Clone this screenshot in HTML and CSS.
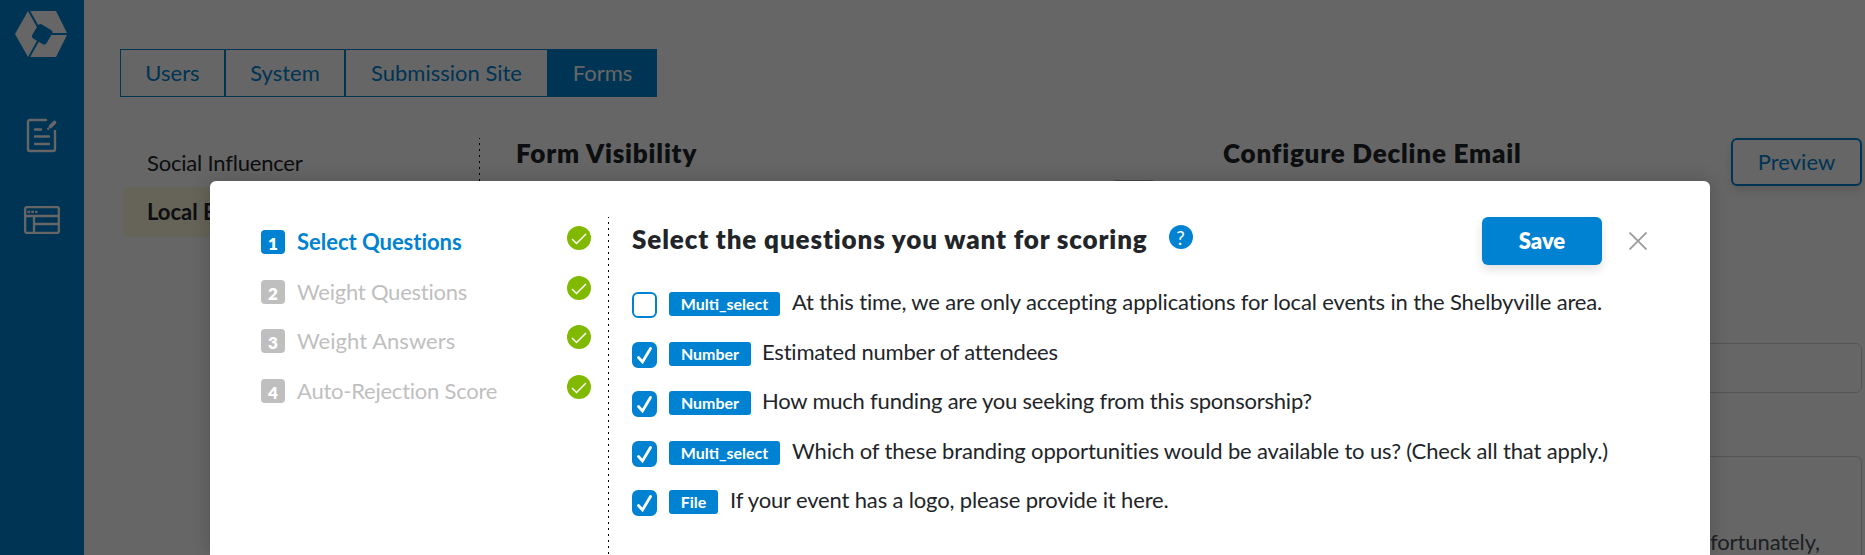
FILE: index.html
```html
<!DOCTYPE html>
<html lang="en">
<head>
  <meta charset="UTF-8">
  <title>Forms</title>
  <link rel="stylesheet" href="styles.css">
</head>
<body>
  <div class="app">
    <nav class="sidebar">
      <svg class="logo" width="54" height="48" viewBox="0 0 54 48">
        <path d="M1 24L14 1H42L53.500 24L42 47H14z"/>
        <path class="logo-gap" d="M14.500 0L28 24L14.500 48M28 24H54"/>
        <rect class="logo-core" x="20" y="16" width="16.500" height="16.500" rx="3" transform="rotate(31 28.200 24.200)"/>
      </svg>
      <svg class="nav-icon icon-form" width="32" height="35" viewBox="0 0 32 35" fill="none" stroke-width="2.400" stroke-linecap="round">
        <path d="M20 2H4Q2 2 2 4V31Q2 33 4 33H27Q29 33 29 31V13M9 11.500h6M9 18.500h14M9 26h14"/>
        <path d="M24.500 8.500l4-4" stroke-width="3.800"/>
        <path d="M22.300 10.700v.1"/>
      </svg>
      <svg class="nav-icon icon-table" width="36" height="28" viewBox="0 0 36 28" fill="none" stroke-width="2.300">
        <rect x="1.200" y="1.200" width="33.600" height="25.600" rx="1.500"/>
        <path d="M1 10h34M10 10V27M10 18h25"/>
        <path d="M3.500 5.800h10" stroke-dasharray="2.600 1.200"/>
      </svg>
    </nav>
    <main class="page">
      <div class="tabs">
        <a class="tab tab-users">Users</a>
        <a class="tab tab-system">System</a>
        <a class="tab tab-site">Submission Site</a>
        <a class="tab tab-forms active">Forms</a>
      </div>
      <div class="content">
        <ul class="forms-list">
          <li>Social Influencer</li>
          <li class="current">Local Event</li>
        </ul>
        <section class="visibility">
          <h2>Form Visibility</h2>
          <div class="toggle"></div>
        </section>
        <section class="decline">
          <div class="decline-head">
            <h2>Configure Decline Email</h2>
            <button class="preview">Preview</button>
          </div>
          <div class="input"></div>
          <div class="textarea">Unfortunately,</div>
        </section>
      </div>
    </main>
  </div>
  <div class="overlay">
    <div class="modal">
      <ol class="steps">
        <li class="active"><b>1</b><span>Select Questions</span><svg class="done" viewBox="0 0 24 24"><circle cx="12" cy="12" r="12"/><path d="M5 13l4.500 4.500L19 8"/></svg></li>
        <li><b>2</b><span>Weight Questions</span><svg class="done" viewBox="0 0 24 24"><circle cx="12" cy="12" r="12"/><path d="M5 13l4.500 4.500L19 8"/></svg></li>
        <li><b>3</b><span class="step-answers">Weight Answers</span><svg class="done" viewBox="0 0 24 24"><circle cx="12" cy="12" r="12"/><path d="M5 13l4.500 4.500L19 8"/></svg></li>
        <li><b>4</b><span>Auto-Rejection Score</span><svg class="done" viewBox="0 0 24 24"><circle cx="12" cy="12" r="12"/><path d="M5 13l4.500 4.500L19 8"/></svg></li>
      </ol>
      <section class="questions">
        <header class="modal-head">
          <h2>Select the questions you want for scoring</h2>
          <span class="help">?</span>
          <button class="save">Save</button>
          <svg class="close" width="18" height="18" viewBox="0 0 18 18"><path d="M.5.5l17 17M17.500.5L.5 17.500"/></svg>
        </header>
        <div class="question"><i class="box"></i><em class="tag tag-multi">Multi_select</em><span>At this time, we are only accepting applications for local events in the Shelbyville area.</span></div>
        <div class="question"><i class="box checked"><svg viewBox="0 0 25 26"><path d="M6.500 15.500l4 4.500L18.500 6.500"/></svg></i><em class="tag tag-number">Number</em><span class="tight">Estimated number of attendees</span></div>
        <div class="question"><i class="box checked"><svg viewBox="0 0 25 26"><path d="M6.500 15.500l4 4.500L18.500 6.500"/></svg></i><em class="tag tag-number">Number</em><span class="tight">How much funding are you seeking from this sponsorship?</span></div>
        <div class="question"><i class="box checked"><svg viewBox="0 0 25 26"><path d="M6.500 15.500l4 4.500L18.500 6.500"/></svg></i><em class="tag tag-multi">Multi_select</em><span>Which of these branding opportunities would be available to us? (Check all that apply.)</span></div>
        <div class="question"><i class="box checked"><svg viewBox="0 0 25 26"><path d="M6.500 15.500l4 4.500L18.500 6.500"/></svg></i><em class="tag tag-file">File</em><span>If your event has a logo, please provide it here.</span></div>
      </section>
    </div>
  </div>
</body>
</html>
```
FILE: styles.css
```css
* { box-sizing: border-box; }
body { margin: 0; height: 555px; overflow: hidden; background: #fff; color: #212529; font: 22px/30px Lato, "Open Sans", sans-serif; font-variant-ligatures: none; white-space: nowrap; }
h2 { margin: 0; font-size: 26px; font-weight: 800; letter-spacing: 0.8px; }
ul, ol { margin: 0; padding: 0; list-style: none; }
button { font: inherit; padding: 0; border-radius: 6px; box-shadow: 0 5px 10px rgba(0,0,0,0.12); }

/* page */
.app { display: flex; height: 555px; }
.sidebar { flex: none; width: 84px; background: #0082d2; display: flex; flex-direction: column; }
.logo { margin: 10px 0 0 14px; fill: #fff; }
.logo-core { fill: #0082d2; }
.logo-gap { fill: none; stroke: #0082d2; stroke-width: 2; }
.nav-icon { stroke: #fff; }
.icon-form { margin: 60px 0 0 26px; }
.icon-table { margin: 53px 0 0 24px; }
.page { flex: 1; padding: 49px 3px 0 36px; }
.tabs { display: flex; height: 48px; color: #0082d2; }
.tab { border: 1px solid #0082d2; text-align: center; line-height: 46px; }
.tab-users { width: 105px; }
.tab-system { width: 120px; }
.tab-site { width: 203px; }
.tab-forms { width: 109px; }
.tab.active { background: #0082d2; color: #fff; }
.content { display: flex; padding-top: 41px; }
.forms-list { width: 360px; height: 417px; padding-left: 3px; background: linear-gradient(#000 2px, transparent 2px) right -1px / 1px 6px repeat-y; }
.forms-list li { width: 330px; height: 49px; padding: 10px 0 0 24px; letter-spacing: -0.2px; }
.forms-list .current { height: 50px; background: #fff8dc; font-weight: 700; border-radius: 3px; letter-spacing: 0; }
.visibility { width: 707px; padding-left: 36px; }
.visibility h2, .decline h2 { line-height: 30px; }
.toggle { width: 56px; height: 24px; margin: 12px 0 0 590px; border-radius: 12px; background: #adb5bd; }
.decline { flex: 1; padding-left: 36px; }
.decline-head { display: flex; justify-content: space-between; }
.preview { width: 131px; height: 48px; border: 2px solid #0082d2; background: #fff; color: #0082d2; }
.input, .textarea { border: 1px solid #ced4da; border-radius: 6px; }
.input { height: 50px; margin-top: 157px; }
.textarea { height: 99px; margin-top: 63px; padding: 72px 41px 0 0; border-bottom: 0; border-radius: 6px 6px 0 0; line-height: 26px; text-align: right; color: #495057; letter-spacing: -0.1px; }

/* modal */
.overlay { position: absolute; inset: 0; padding: 181px 155px 0 210px; background: rgba(0,0,0,0.6); overflow: hidden; }
.modal { display: flex; height: 374px; padding: 36px 63px 0 51px; border-radius: 6px 6px 0 0; background: #fff; box-shadow: 0 0 20px rgba(0,0,0,0.2); }
.steps { width: 348px; padding: 9px 18px 0 0; color: #bfbfbf; background: linear-gradient(#000 2px, transparent 2px) right -1px / 1px 6px repeat-y; }
.steps li { display: flex; height: 49.6px; }
.steps b { width: 24px; height: 24px; margin: 4px 12px 0 0; border-radius: 4px; background: #bfbfbf; color: #fff; font: 800 17px/27px Lato, sans-serif; text-align: center; }
.steps span { padding-top: 1px; letter-spacing: -0.23px; }
.steps .step-answers { letter-spacing: 0.05px; }
.steps .active { color: #0082d2; font-weight: 700; }
.steps .active span { letter-spacing: -0.03px; }
.steps .active b { background: #0082d2; }
.done { width: 24px; height: 24px; margin-left: auto; }
.done circle { fill: #80b900; }
.done path { fill: none; stroke: #fff; stroke-width: 1.500; }
.questions { flex: 1; padding-left: 23px; }
.modal-head { display: flex; height: 75px; }
.modal-head h2 { padding-top: 5px; line-height: 34px; letter-spacing: 0.86px; }
.help { width: 24px; height: 24px; margin: 8px 0 0 21px; border-radius: 50%; background: #0082d2; color: #fff; font: 19px/25px Lato, sans-serif; text-align: center; }
.save { width: 120px; height: 48px; margin-left: auto; border: 0; background: #0082d2; color: #fff; font-weight: 800; }
.close { margin: 15px 0 0 27px; stroke: #999; stroke-width: 1.700; }
.question { display: flex; height: 49.6px; }
.box { width: 25px; height: 26px; border: 2px solid #0082d2; border-radius: 6px; margin-right: 12px; }
.box.checked { background: #0082d2; }
.box svg { display: block; width: 25px; height: 26px; margin: -2px; fill: none; stroke: #fff; stroke-width: 2.800; stroke-linecap: round; }
.tag { height: 24px; margin-right: 12px; border-radius: 3px; background: #0082d2; color: #fff; font: 700 16px/24px Lato, sans-serif; text-align: center; }
.tag-multi { width: 111px; }
.tag-number { width: 82px; }
.tag-file { width: 49px; }
.question span { margin-top: -5px; letter-spacing: -0.15px; }
.question .tight { margin-left: -1px; letter-spacing: -0.21px; }
```
